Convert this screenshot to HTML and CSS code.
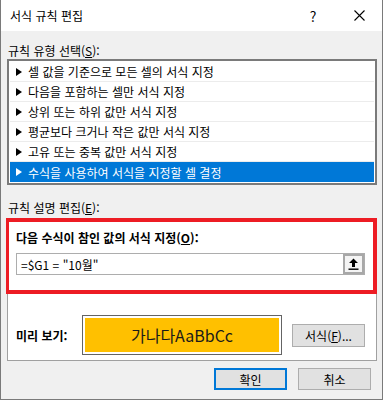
FILE: index.html
```html
<!DOCTYPE html>
<html lang="ko">
<head>
  <meta charset="UTF-8">
  <title>서식 규칙 편집</title>
  <link rel="stylesheet" href="styles.css">
</head>
<body>
  <div class="dialog">
    <div class="titlebar">
      <span class="title">서식 규칙 편집</span>
      <span class="title-btn">?</span>
      <span class="title-btn">
        <svg width="11" height="11" viewBox="0 0 11 11"><path d="M0.5 0.5 L10.5 10.5 M10.5 0.5 L0.5 10.5" stroke="#000" stroke-width="1.1" fill="none"/></svg>
      </span>
    </div>

    <div class="content">
      <div class="label">규칙 유형 선택(<u>S</u>):</div>
      <ul class="rule-list">
        <li><span class="arrow"></span>셀 값을 기준으로 모든 셀의 서식 지정</li>
        <li><span class="arrow"></span>다음을 포함하는 셀만 서식 지정</li>
        <li><span class="arrow"></span>상위 또는 하위 값만 서식 지정</li>
        <li><span class="arrow"></span>평균보다 크거나 작은 값만 서식 지정</li>
        <li><span class="arrow"></span>고유 또는 중복 값만 서식 지정</li>
        <li class="selected"><span class="arrow"></span>수식을 사용하여 서식을 지정할 셀 결정</li>
      </ul>

      <div class="label label-second">규칙 설명 편집(<u>E</u>):</div>
      <div class="panel">
        <div class="highlight">
          <div class="formula-label">다음 수식이 참인 값의 서식 지정(<u>O</u>):</div>
          <div class="formula-input">
            <span class="formula-text">=$G1 = "10월"</span>
            <span class="collapse-btn">
              <svg width="11" height="12" viewBox="0 0 11 12">
                <path d="M5.5 0.5 L10 5 L7 5 L7 9 L4 9 L4 5 L1 5 Z" fill="#000"/>
                <rect x="0.5" y="10.5" width="10" height="1.4" fill="#000"/>
              </svg>
            </span>
          </div>
        </div>
        <div class="preview-row">
          <span class="preview-label">미리 보기:</span>
          <div class="preview-box"><div class="preview-fill">가나다AaBbCc</div></div>
          <span class="btn btn-format">서식(<u>F</u>)...</span>
        </div>
      </div>

      <div class="actions">
        <span class="btn btn-ok">확인</span>
        <span class="btn">취소</span>
      </div>
    </div>
  </div>
</body>
</html>
```

FILE: styles.css
```css
:root {
  --face: #f0f0f0;
  --blue: #0078d7;
  --red: #ed1c24;
  --gray-border: #adadad;
}

body {
  margin: 0;
  font-family: "Noto Sans CJK KR", "Noto Sans", sans-serif;
  font-size: 12px;
  color: #000;
  background: #fff;
}

.dialog {
  width: 383px;
  height: 400px;
  box-sizing: border-box;
  border: 1px solid #7a7a7a;
  border-top: none;
  background: var(--face);
}

.titlebar {
  height: 31px;
  background: #fff;
  display: flex;
  align-items: center;
}

.title {
  flex: 1;
  padding-left: 9px;
  font-size: 12px;
}

.title-btn {
  width: 46px;
  height: 31px;
  display: flex;
  align-items: center;
  justify-content: center;
  font-size: 14px;
}

.content {
  padding: 0 5px 0 6px;
}

.label {
  line-height: 16px;
  padding-left: 1px;
  margin-top: 12px;
}

.label-second {
  margin-top: 15px;
}

.rule-list {
  list-style: none;
  margin: 0;
  margin-top: 0;
  padding: 1px;
  width: 370px;
  box-sizing: border-box;
  border: 2px solid #7a7a7a;
  background: #fff;
}

.rule-list li {
  height: 20px;
  box-sizing: border-box;
  border-bottom: 1px solid #ececec;
  display: flex;
  align-items: center;
  padding-left: 6px;
}

.rule-list li:last-child {
  border-bottom: none;
}

.rule-list li.selected {
  background: var(--blue);
  color: #fff;
}

.arrow {
  width: 0;
  height: 0;
  border-left: 6px solid currentColor;
  border-top: 4px solid transparent;
  border-bottom: 4px solid transparent;
  margin-right: 6px;
}

.panel {
  margin-top: 2px;
  width: 370px;
  box-sizing: border-box;
  background: #fff;
  border: 1px solid #a0a0a0;
}

.highlight {
  margin: -1px -1px 0 -2px;
  border: 4px solid var(--red);
  border-left-width: 3px;
  padding: 8px 8px 15px 7px;
}

.formula-label {
  font-weight: bold;
  line-height: 16px;
}

.formula-input {
  margin-top: 7px;
  height: 22px;
  box-sizing: border-box;
  border: 1px solid var(--gray-border);
  display: flex;
  align-items: center;
}

.formula-text {
  flex: 1;
  padding-left: 4px;
}

.collapse-btn {
  width: 21px;
  height: 20px;
  box-sizing: border-box;
  border: 2px solid #a8a8a8;
  background: #f4f4f4;
  display: flex;
  align-items: center;
  justify-content: center;
}

.preview-row {
  display: flex;
  align-items: center;
  padding: 21px 0 5px 8px;
}

.preview-label {
  width: 66px;
  font-weight: bold;
}

.preview-box {
  width: 200px;
  height: 40px;
  box-sizing: border-box;
  border: 1px solid #646464;
  padding: 2px;
}

.preview-fill {
  height: 100%;
  background: #ffc000;
  display: flex;
  align-items: center;
  justify-content: center;
  font-size: 16px;
  color: #1a1a1a;
}

.btn {
  width: 73px;
  height: 22px;
  box-sizing: border-box;
  border: 1px solid var(--gray-border);
  background: #e1e1e1;
  display: flex;
  align-items: center;
  justify-content: center;
}

.btn-format {
  margin-left: 10px;
  height: 23px;
}

.btn-ok {
  border: 2px solid var(--blue);
}

.actions {
  display: flex;
  justify-content: flex-end;
  gap: 11px;
  margin-top: 7px;
  padding-right: 6px;
}
```
